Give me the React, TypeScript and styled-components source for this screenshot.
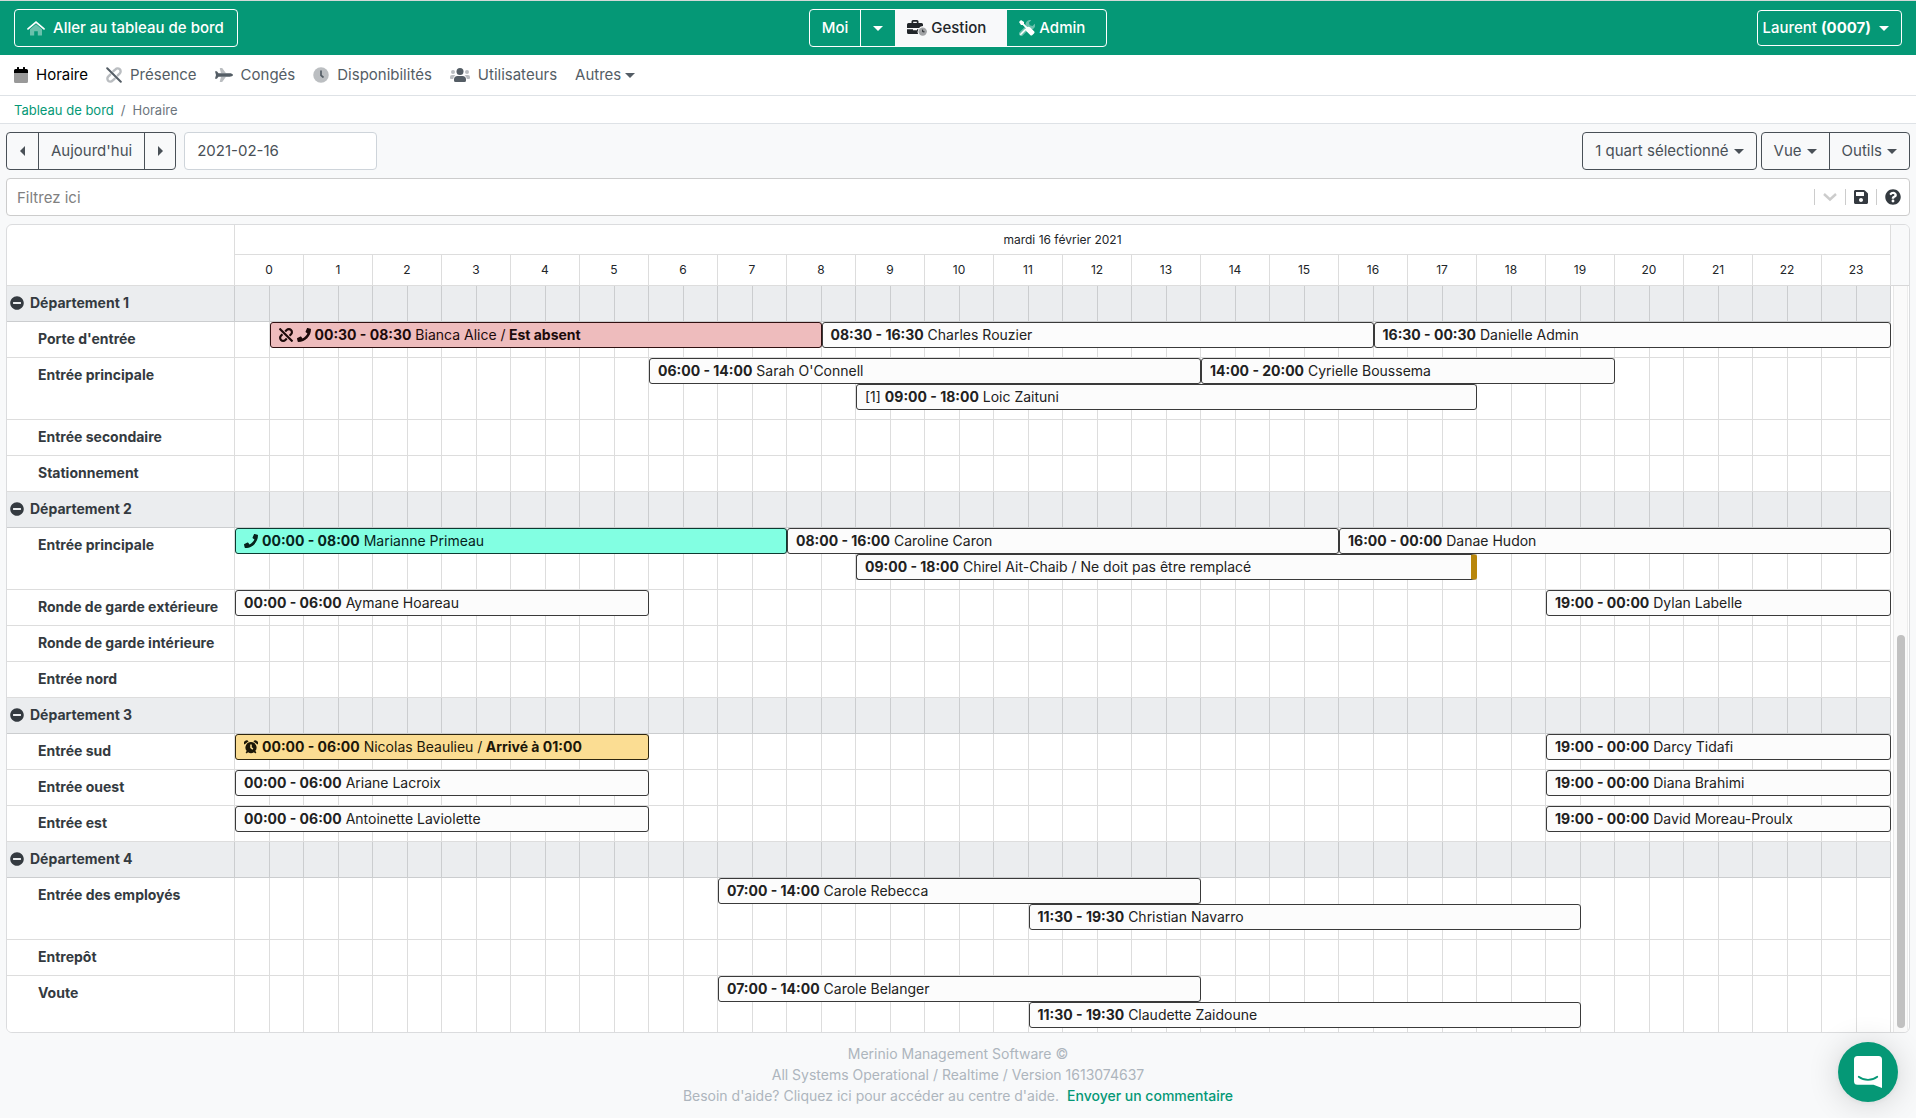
import React from "react";
import styled, { createGlobalStyle, css } from "styled-components";
import {
  FaMinusCircle,
  FaPhone,
  FaQuestionCircle,
  FaSave,
  FaUnlink,
} from "react-icons/fa";

const green = "#059876";
const line = "rgba(0, 0, 0, 0.133)";

const GlobalStyle = createGlobalStyle`
  *, *::before, *::after { box-sizing: border-box; }
  body {
    margin: 0;
    background: #f8f9fa;
    color: #212529;
    font-family: Inter, "Liberation Sans", sans-serif;
    font-size: 15px;
    line-height: 24px;
  }
  button, input { font: inherit; color: inherit; }
  button { cursor: pointer; }
  a { text-decoration: none; }
`;

const Page = styled.div`
  display: flex;
  flex-direction: column;
  height: 100vh;
  min-height: 600px;
`;

/* ---------- Icons ---------- */

const Glyph = styled.svg<{ $w?: number }>`
  width: ${(p) => p.$w ?? 16}px;
  height: 16px;
  flex: none;
  display: block;
`;

const HomeIcon = () => (
  <Glyph $w={18} viewBox="0 0 18 16" fill="currentColor" aria-hidden="true">
    <path d="M9 4.2 3 9.3V15a.6.6 0 0 0 .6.6h3.6v-4.4h3.6v4.4h3.6a.6.6 0 0 0 .6-.6V9.3z" opacity=".4" />
    <path d="M1 8.9 9 2l8 6.9" fill="none" stroke="currentColor" strokeWidth="1.7" strokeLinecap="round" />
  </Glyph>
);

const CalendarIcon = () => (
  <Glyph $w={14} viewBox="0 0 14 16" fill="currentColor" aria-hidden="true">
    <path d="M0 6h14v8.5a1.5 1.5 0 0 1-1.5 1.5h-11A1.5 1.5 0 0 1 0 14.5z" opacity=".4" />
    <path d="M1.5 2H3V.4A.4.4 0 0 1 3.4 0h1.2a.4.4 0 0 1 .4.4V2h4V.4a.4.4 0 0 1 .4-.4h1.2a.4.4 0 0 1 .4.4V2h1.5A1.5 1.5 0 0 1 14 3.5V6H0V3.5A1.5 1.5 0 0 1 1.5 2z" />
  </Glyph>
);

const PresenceIcon = () => (
  <Glyph viewBox="0 0 16 16" fill="none" stroke="currentColor" strokeLinecap="round" aria-hidden="true">
    <g strokeWidth="2.4" opacity=".4">
      <path d="M7.4 4.2 9.5 2.3a2.9 2.9 0 0 1 4.300 4.100l-2 2" />
      <path d="M8.600 11.800l-2.100 1.900a2.900 2.900 0 0 1-4.300-4.100l2-2" />
    </g>
    <path d="M1.200 1.200l13.600 13.600" strokeWidth="2" />
  </Glyph>
);

const PlaneIcon = () => (
  <Glyph $w={18} viewBox="0 0 18 16" fill="currentColor" aria-hidden="true">
    <path d="M6 6.3 4.8 1.600A.5.5 0 0 1 5.300 1h1.900L11 6.300zM6 9.700l-1.200 4.700a.5.5 0 0 0 .5.600h1.900L11 9.700z" opacity=".4" />
    <path d="M3.500 6.300h11.200c1.200 0 3.300.6 3.300 1.700s-2.100 1.700-3.300 1.700H3.500l-1.400 1.900a.5.500 0 0 1-.4.200H.5a.4.4 0 0 1-.4-.5L1 8 .1 4.700a.4.400 0 0 1 .4-.5h1.200a.5.5 0 0 1 .4.200z" />
  </Glyph>
);

const ClockIcon = () => (
  <Glyph viewBox="0 0 16 16" fill="currentColor" aria-hidden="true">
    <circle cx="8" cy="8" r="7.75" opacity=".4" />
    <path d="M8 4v4.300l2 1.700" fill="none" stroke="currentColor" strokeWidth="1.7" strokeLinecap="round" />
  </Glyph>
);

const UsersIcon = () => (
  <Glyph $w={20} viewBox="0 0 20 16" fill="currentColor" aria-hidden="true">
    <g opacity=".4">
      <circle cx="3" cy="5" r="2" />
      <circle cx="17" cy="5" r="2" />
      <path d="M0 10a2 2 0 0 1 2-2h2a2 2 0 0 1 1.400.600A4.500 4.500 0 0 0 3.100 12H1a1 1 0 0 1-1-1zM20 10a2 2 0 0 0-2-2h-2a2 2 0 0 0-1.400.600A4.500 4.500 0 0 1 16.900 12H19a1 1 0 0 0 1-1z" />
    </g>
    <circle cx="10" cy="4.500" r="3.500" />
    <path d="M4 12.600A3.600 3.600 0 0 1 7.600 9h4.800a3.600 3.600 0 0 1 3.600 3.600v.9a1.500 1.500 0 0 1-1.500 1.500h-9A1.500 1.500 0 0 1 4 13.500z" />
  </Glyph>
);

const BriefcaseIcon = () => (
  <Glyph $w={20} viewBox="0 0 20 16" fill="currentColor" aria-hidden="true">
    <path d="M4.500 3V1.500A1.500 1.500 0 0 1 6 0h4a1.500 1.500 0 0 1 1.500 1.500V3h3A1.500 1.500 0 0 1 16 4.500V6a5 5 0 0 0-4 2H0V4.500A1.500 1.500 0 0 1 1.500 3zm1.700 0h3.600V1.700H6.200zM0 9.200h6v1h4v-1h1.400a5 5 0 0 0-.3 4.800H1.500A1.500 1.500 0 0 1 0 12.500z" />
    <circle cx="15.700" cy="11.600" r="4.200" opacity=".4" />
    <path d="M15.700 9.600v2.200h1.800" fill="none" stroke="currentColor" strokeWidth="1" />
  </Glyph>
);

const ToolsIcon = () => (
  <Glyph viewBox="0 0 16 16" fill="currentColor" aria-hidden="true">
    <path d="M15.800 3.700 13.500 6l-2.800-.7-.7-2.800L12.300.2a4.500 4.500 0 0 0-5.500 5.900L.8 12.100a2.200 2.200 0 1 0 3.100 3.100L9.700 9.400a4.500 4.500 0 0 0 6.100-5.700z" opacity=".4" />
    <path d="M2 0 0 2l2 3h1.700l3.200 3.200a3 3 0 0 0 .6 3.100l3.700 3.700a1.500 1.500 0 0 0 2.200 0l1.600-1.600a1.500 1.500 0 0 0 0-2.200l-3.700-3.700a3 3 0 0 0-3.100-.6L5 3.700V2z" />
    <path d="M1.800 14.200 6.500 9.500" stroke="currentColor" strokeWidth="1.600" strokeLinecap="round" />
  </Glyph>
);

const AlarmIcon = () => (
  <svg width="14" height="14" viewBox="0 0 16 16" fill="currentColor" aria-hidden="true">
    <path fillRule="evenodd" d="M8 2.400a6.300 6.300 0 0 1 4.900 10.300l1.300 1.300-1.300 1.400-1.500-1.400a6.300 6.300 0 0 1-6.800 0l-1.500 1.400L1.800 14l1.300-1.300A6.300 6.300 0 0 1 8 2.400zM7.100 5v4.100l2.500 1.900 1.100-1.400-1.800-1.400V5z" />
    <path d="M.6 5.200A2.700 2.700 0 0 1 5.300 1.500zM15.400 5.200a2.700 2.700 0 0 0-4.700-3.700z" />
  </svg>
);

const ChevronIcon = () => (
  <svg width="20" height="20" viewBox="0 0 20 20" fill="none" stroke="#ccc" strokeWidth="2.4" aria-hidden="true">
    <path d="M4 7l6 5.500L16 7" />
  </svg>
);

const ChatIcon = () => (
  <svg width="28" height="32" viewBox="0 0 28 32" aria-hidden="true">
    <path d="M3.500 0h21A3.500 3.500 0 0 1 28 3.500V32l-8.500-3.200h-16A3.500 3.500 0 0 1 0 25.300V3.500A3.500 3.500 0 0 1 3.500 0z" fill="#fff" />
    <path d="M4.700 20.700c5.500 4.200 13.100 4.200 18.600 0" fill="none" stroke={green} strokeWidth="1.700" strokeLinecap="round" />
  </svg>
);

const Caret = styled.span<{ $dir?: "left" | "right" }>`
  display: inline-block;
  flex: none;
  width: 0;
  height: 0;
  border: 5px solid transparent;
  ${(p) =>
    p.$dir === "left"
      ? css`border-left: 0; border-right-color: currentColor;`
      : p.$dir === "right"
      ? css`border-right: 0; border-left-color: currentColor;`
      : css`border-bottom: 0; border-top-color: currentColor;`}
`;

/* ---------- Top bar ---------- */

const TopBar = styled.header`
  display: grid;
  grid-template-columns: 1fr auto 1fr;
  align-items: center;
  flex: none;
  height: 55px;
  padding: 0 14px;
  background: ${green};
  border-top: 1px solid #d3d9d8;
  color: #fff;
`;

const HomeLink = styled.a`
  display: inline-flex;
  align-items: center;
  gap: 8px;
  height: 38px;
  padding: 0 13px 0 12px;
  border: 1px solid #fff;
  border-radius: 4px;
  color: #fff;
  font-weight: 500;
  vertical-align: top;
`;

const ModeGroup = styled.div`
  display: flex;
  height: 38px;
  border: 1px solid #fff;
  border-radius: 4px;
  overflow: hidden;
`;

const ModeButton = styled.button<{ $active?: boolean; $divided?: boolean; $roomy?: boolean }>`
  display: flex;
  align-items: center;
  gap: 4px;
  padding: 0 ${(p) => (p.$roomy ? 21 : 12)}px 0 12px;
  border: 0;
  border-left: ${(p) => (p.$divided ? "1px solid #fff" : "0")};
  background: ${(p) => (p.$active ? "#f8f9fa" : "transparent")};
  color: ${(p) => (p.$active ? "#212529" : "#fff")};
  font-weight: 500;
`;

const UserButton = styled.button`
  justify-self: end;
  display: flex;
  align-items: center;
  gap: 4px;
  height: 36px;
  padding: 0 12px 0 4px;
  border: 1px solid #fff;
  border-radius: 4px;
  background: transparent;
  color: #fff;
  font-weight: 500;
  b { margin-right: 4px; font-weight: 700; }
`;

/* ---------- Navigation ---------- */

const Nav = styled.nav`
  display: flex;
  align-items: center;
  gap: 18px;
  flex: none;
  height: 41px;
  padding: 0 14px;
  background: #fff;
  border-bottom: 1px solid #dee2e6;
`;

const NavLink = styled.a<{ $active?: boolean; $gap?: number }>`
  display: flex;
  align-items: center;
  gap: ${(p) => p.$gap ?? 8}px;
  color: ${(p) => (p.$active ? "#000" : "#545d65")};
`;

const Breadcrumb = styled.nav`
  display: flex;
  align-items: center;
  gap: 7px;
  flex: none;
  height: 28px;
  padding: 0 14px;
  background: #fff;
  border-bottom: 1px solid #dee2e6;
  color: #6c757d;
  font-size: 13px;
  a { color: ${green}; }
`;

/* ---------- Toolbar ---------- */

const Workspace = styled.main`
  display: flex;
  flex-direction: column;
  flex: 1;
  min-height: 0;
  gap: 8px;
  padding: 8px 6px 0;
`;

const Toolbar = styled.div`
  display: flex;
  gap: 4px;
  height: 38px;
  flex: none;
`;

const ButtonGroup = styled.div`
  display: flex;
  border: 1px solid #495057;
  border-radius: 4px;
`;

const ToolButton = styled.button`
  display: flex;
  align-items: center;
  justify-content: center;
  gap: 5px;
  padding: 0 12px;
  min-width: 31px;
  border: 0;
  background: transparent;
  color: #495057;
  & + & { border-left: 1px solid #495057; }
`;

const DateInput = styled.input`
  width: 193px;
  margin: 0 auto 0 4px;
  padding: 0 12px;
  border: 1px solid #ced4da;
  border-radius: 4px;
  background: #fff;
  color: #495057;
`;

const FilterBar = styled.div`
  display: flex;
  align-items: center;
  flex: none;
  height: 38px;
  padding-right: 8px;
  background: #fff;
  border: 1px solid #ccc;
  border-radius: 4px;
  color: #343a40;
`;

const FilterInput = styled.input`
  flex: 1;
  height: 36px;
  padding: 0 10px;
  border: 0;
  background: transparent;
  outline: 0;
  &::placeholder { color: #808080; opacity: 1; }
`;

const FilterButton = styled.button`
  display: flex;
  align-items: center;
  justify-content: center;
  width: 31px;
  height: 16px;
  padding: 0;
  border: 0;
  border-left: 1px solid #ccc;
  background: transparent;
  &:last-child { justify-content: flex-end; width: 25px; }
`;

/* ---------- Schedule ---------- */

const Panel = styled.section`
  display: flex;
  flex: 1;
  min-height: 0;
  overflow: hidden;
  border: 1px solid #dbdcde;
  border-radius: 6px;
  background: #fff;
`;

const Scroller = styled.div`
  flex: 1;
  min-width: 0;
  overflow: hidden;
`;

const Grid = styled.table`
  width: 100%;
  table-layout: fixed;
  border-collapse: separate;
  border-spacing: 0;
  font-size: 14px;
  th, td {
    padding: 0;
    border-bottom: 1px solid ${line};
    vertical-align: top;
  }
  th { border-right: 1px solid ${line}; }
`;

const LabelCol = styled.col`
  width: 228px;
`;

const HeadCell = styled.th<{ $h: number }>`
  height: ${(p) => p.$h}px;
  font-size: 12px;
  font-weight: 400;
  line-height: 16px;
  && { vertical-align: middle; }
`;

const RowLabel = styled.th`
  color: #343a40;
  text-align: left;
  font-weight: 700;
  line-height: 20px;
  white-space: nowrap;
`;

const PostName = styled.span`
  display: block;
  padding: 7px 0 0 31px;
`;

const DepartmentToggle = styled.button`
  display: flex;
  align-items: center;
  gap: 6px;
  height: 34px;
  padding: 0 0 0 3px;
  border: 0;
  background: transparent;
  line-height: 20px;
`;

const Row = styled.tr<{ $dept?: boolean }>`
  background: ${(p) => (p.$dept ? "#ebedef" : "#fff")};
`;

const Track = styled.div`
  display: grid;
  min-height: 35px;
  & > * { grid-area: 1 / 1; }
`;

const Slots = styled.div`
  display: grid;
  grid-template-columns: repeat(48, minmax(0, 1fr));
  i { border-right: 1px solid ${line}; }
`;

const Lanes = styled.div`
  display: flex;
  flex-direction: column;
  padding-bottom: 9px;
`;

const Lane = styled.div`
  display: grid;
  grid-template-columns: repeat(48, minmax(0, 1fr));
  height: 26px;
`;

type Tone = "plain" | "absent" | "confirmed" | "late";

const tones: Record<Tone, { bg: string; border: string; text: string }> = {
  plain: { bg: "#fcfcfc", border: "#3a3a3a", text: "#212121" },
  absent: { bg: "#eebcbd", border: "#2f1011", text: "#1c0a0a" },
  confirmed: { bg: "#82ffe2", border: "#0d3a30", text: "#06231c" },
  late: { bg: "#fbdd93", border: "#2e260f", text: "#1c1708" },
};

const Shift = styled.button<{ $tone: Tone; $from: number; $to: number; $flag?: boolean }>`
  grid-column: ${(p) => p.$from + 1} / ${(p) => p.$to + 1};
  grid-row: 1;
  display: flex;
  align-items: center;
  gap: 4px;
  min-width: 0;
  overflow: hidden;
  padding: 0 8px;
  border: 1px solid ${(p) => tones[p.$tone].border};
  border-radius: 3px;
  ${(p) => p.$flag && css`border-right: 6px solid #b8860b;`}
  background: ${(p) => tones[p.$tone].bg};
  color: ${(p) => tones[p.$tone].text};
  font-size: 14px;
  line-height: 20px;
  white-space: nowrap;
  svg { flex: none; }
  b { font-weight: 700; }
`;

const Gutter = styled.div`
  display: flex;
  flex-direction: column;
  width: 18px;
  flex: none;
`;

const GutterHead = styled.div`
  flex: none;
  height: 61px;
  background: #f8f9fa;
  border-bottom: 1px solid ${line};
`;

const ScrollTrack = styled.div`
  display: flex;
  flex-direction: column;
  justify-content: flex-end;
  flex: 1;
  margin: 0 1px 0 2px;
  padding: 0 2px 4px 3px;
  border-left: 1px solid #e8e8e8;
  border-right: 1px solid #ededed;
  background: #fafafa;
`;

const ScrollThumb = styled.div`
  width: 8px;
  height: 53%;
  border-radius: 4px;
  background: #c1c1c1;
`;

/* ---------- Footer ---------- */

const Footer = styled.footer`
  flex: none;
  height: 85px;
  padding-top: 10px;
  color: #adb5bd;
  font-size: 14px;
  line-height: 21px;
  text-align: center;
  p { margin: 0; }
  a { margin-left: 4px; color: ${green}; font-weight: 500; }
`;

const ChatLauncher = styled.button`
  position: fixed;
  right: 18px;
  bottom: 16px;
  display: flex;
  align-items: center;
  justify-content: center;
  width: 60px;
  height: 60px;
  padding: 0;
  border: 0;
  border-radius: 50%;
  background: ${green};
  box-shadow: 0 1px 6px rgba(0, 0, 0, 0.06), 0 2px 32px rgba(0, 0, 0, 0.16);
`;

/* ---------- Data ---------- */

type ShiftData = {
  from: number;
  to: number;
  time: string;
  name: string;
  prefix?: string;
  note?: string;
  tone?: Tone;
  icons?: React.ReactNode;
  flag?: boolean;
};

type Post = { name: string; lanes: ShiftData[][] };

const shift = (time: string, name: string, extra: Partial<ShiftData> = {}): ShiftData => {
  const [from, to] = time.split(" - ").map((t) => {
    const [h, m] = t.split(":").map(Number);
    return h * 2 + m / 30;
  });
  return { from, to: to <= from ? 48 : to, time, name, ...extra };
};

const departments: { name: string; posts: Post[] }[] = [
  {
    name: "Département 1",
    posts: [
      {
        name: "Porte d'entrée",
        lanes: [[
          shift("00:30 - 08:30", "Bianca Alice /", {
            note: "Est absent",
            tone: "absent",
            icons: <><FaUnlink size={14} /><FaPhone size={14} /></>,
          }),
          shift("08:30 - 16:30", "Charles Rouzier"),
          shift("16:30 - 00:30", "Danielle Admin"),
        ]],
      },
      {
        name: "Entrée principale",
        lanes: [
          [shift("06:00 - 14:00", "Sarah O'Connell"), shift("14:00 - 20:00", "Cyrielle Boussema")],
          [shift("09:00 - 18:00", "Loic Zaituni", { prefix: "[1]" })],
        ],
      },
      { name: "Entrée secondaire", lanes: [] },
      { name: "Stationnement", lanes: [] },
    ],
  },
  {
    name: "Département 2",
    posts: [
      {
        name: "Entrée principale",
        lanes: [
          [
            shift("00:00 - 08:00", "Marianne Primeau", { tone: "confirmed", icons: <FaPhone size={14} /> }),
            shift("08:00 - 16:00", "Caroline Caron"),
            shift("16:00 - 00:00", "Danae Hudon"),
          ],
          [shift("09:00 - 18:00", "Chirel Ait-Chaib / Ne doit pas être remplacé", { flag: true })],
        ],
      },
      {
        name: "Ronde de garde extérieure",
        lanes: [[shift("00:00 - 06:00", "Aymane Hoareau"), shift("19:00 - 00:00", "Dylan Labelle")]],
      },
      { name: "Ronde de garde intérieure", lanes: [] },
      { name: "Entrée nord", lanes: [] },
    ],
  },
  {
    name: "Département 3",
    posts: [
      {
        name: "Entrée sud",
        lanes: [[
          shift("00:00 - 06:00", "Nicolas Beaulieu /", { note: "Arrivé à 01:00", tone: "late", icons: <AlarmIcon /> }),
          shift("19:00 - 00:00", "Darcy Tidafi"),
        ]],
      },
      {
        name: "Entrée ouest",
        lanes: [[shift("00:00 - 06:00", "Ariane Lacroix"), shift("19:00 - 00:00", "Diana Brahimi")]],
      },
      {
        name: "Entrée est",
        lanes: [[shift("00:00 - 06:00", "Antoinette Laviolette"), shift("19:00 - 00:00", "David Moreau-Proulx")]],
      },
    ],
  },
  {
    name: "Département 4",
    posts: [
      {
        name: "Entrée des employés",
        lanes: [[shift("07:00 - 14:00", "Carole Rebecca")], [shift("11:30 - 19:30", "Christian Navarro")]],
      },
      { name: "Entrepôt", lanes: [] },
      {
        name: "Voute",
        lanes: [[shift("07:00 - 14:00", "Carole Belanger")], [shift("11:30 - 19:30", "Claudette Zaidoune")]],
      },
    ],
  },
];

const hours = Array.from({ length: 24 }, (_, h) => h);
const halfHours = Array.from({ length: 48 }, (_, h) => h);

const Timeline = ({ lanes = [] }: { lanes?: ShiftData[][] }) => (
  <Track>
    <Slots aria-hidden="true">{halfHours.map((h) => <i key={h} />)}</Slots>
    {lanes.length > 0 && (
      <Lanes>
        {lanes.map((lane, i) => (
          <Lane key={i}>
            {lane.map((s) => (
              <Shift key={s.time} $tone={s.tone ?? "plain"} $from={s.from} $to={s.to} $flag={s.flag}>
                {s.icons}
                <span>
                  {s.prefix && `${s.prefix} `}
                  <b>{s.time}</b> {s.name}
                  {s.note && <b> {s.note}</b>}
                </span>
              </Shift>
            ))}
          </Lane>
        ))}
      </Lanes>
    )}
  </Track>
);

export default function App() {
  return (
    <Page>
      <GlobalStyle />
      <TopBar>
        <div>
          <HomeLink href="#tableau"><HomeIcon />Aller au tableau de bord</HomeLink>
        </div>
        <ModeGroup>
          <ModeButton>Moi</ModeButton>
          <ModeButton $divided aria-label="Plus d'options"><Caret /></ModeButton>
          <ModeButton $active $roomy><BriefcaseIcon />Gestion</ModeButton>
          <ModeButton $roomy><ToolsIcon />Admin</ModeButton>
        </ModeGroup>
        <UserButton>Laurent <b>(0007)</b><Caret /></UserButton>
      </TopBar>

      <Nav>
        <NavLink href="#horaire" $active><CalendarIcon />Horaire</NavLink>
        <NavLink href="#presence"><PresenceIcon />Présence</NavLink>
        <NavLink href="#conges"><PlaneIcon />Congés</NavLink>
        <NavLink href="#disponibilites"><ClockIcon />Disponibilités</NavLink>
        <NavLink href="#utilisateurs"><UsersIcon />Utilisateurs</NavLink>
        <NavLink href="#autres" $gap={4}>Autres<Caret /></NavLink>
      </Nav>

      <Breadcrumb aria-label="Fil d'Ariane">
        <a href="#tableau">Tableau de bord</a>
        <span>/</span>
        <span>Horaire</span>
      </Breadcrumb>

      <Workspace>
        <Toolbar>
          <ButtonGroup>
            <ToolButton aria-label="Jour précédent"><Caret $dir="left" /></ToolButton>
            <ToolButton>Aujourd'hui</ToolButton>
            <ToolButton aria-label="Jour suivant"><Caret $dir="right" /></ToolButton>
          </ButtonGroup>
          <DateInput aria-label="Date" defaultValue="2021-02-16" />
          <ButtonGroup>
            <ToolButton>1 quart sélectionné<Caret /></ToolButton>
          </ButtonGroup>
          <ButtonGroup>
            <ToolButton>Vue<Caret /></ToolButton>
            <ToolButton>Outils<Caret /></ToolButton>
          </ButtonGroup>
        </Toolbar>

        <FilterBar>
          <FilterInput aria-label="Filtrez ici" placeholder="Filtrez ici" />
          <FilterButton aria-label="Ouvrir les filtres"><ChevronIcon /></FilterButton>
          <FilterButton aria-label="Enregistrer"><FaSave size={16} /></FilterButton>
          <FilterButton aria-label="Aide"><FaQuestionCircle size={16} /></FilterButton>
        </FilterBar>

        <Panel>
          <Scroller>
            <Grid>
              <colgroup>
                <LabelCol />
                {hours.map((h) => <col key={h} />)}
              </colgroup>
              <thead>
                <tr>
                  <HeadCell $h={61} rowSpan={2} />
                  <HeadCell $h={30} colSpan={24}>mardi 16 février 2021</HeadCell>
                </tr>
                <tr>
                  {hours.map((h) => <HeadCell $h={31} key={h} scope="col">{h}</HeadCell>)}
                </tr>
              </thead>
              <tbody>
                {departments.map((dept) => (
                  <React.Fragment key={dept.name}>
                    <Row $dept>
                      <RowLabel scope="row">
                        <DepartmentToggle><FaMinusCircle size={14} />{dept.name}</DepartmentToggle>
                      </RowLabel>
                      <td colSpan={24}><Timeline /></td>
                    </Row>
                    {dept.posts.map((post) => (
                      <Row key={post.name}>
                        <RowLabel scope="row"><PostName>{post.name}</PostName></RowLabel>
                        <td colSpan={24}><Timeline lanes={post.lanes} /></td>
                      </Row>
                    ))}
                  </React.Fragment>
                ))}
              </tbody>
            </Grid>
          </Scroller>
          <Gutter aria-hidden="true">
            <GutterHead />
            <ScrollTrack><ScrollThumb /></ScrollTrack>
          </Gutter>
        </Panel>
      </Workspace>

      <Footer>
        <p>Merinio Management Software ©</p>
        <p>All Systems Operational / Realtime / Version 1613074637</p>
        <p>
          Besoin d'aide? Cliquez ici pour accéder au centre d'aide. <a href="#commentaire">Envoyer un commentaire</a>
        </p>
      </Footer>
      <ChatLauncher aria-label="Ouvrir la messagerie"><ChatIcon /></ChatLauncher>
    </Page>
  );
}
